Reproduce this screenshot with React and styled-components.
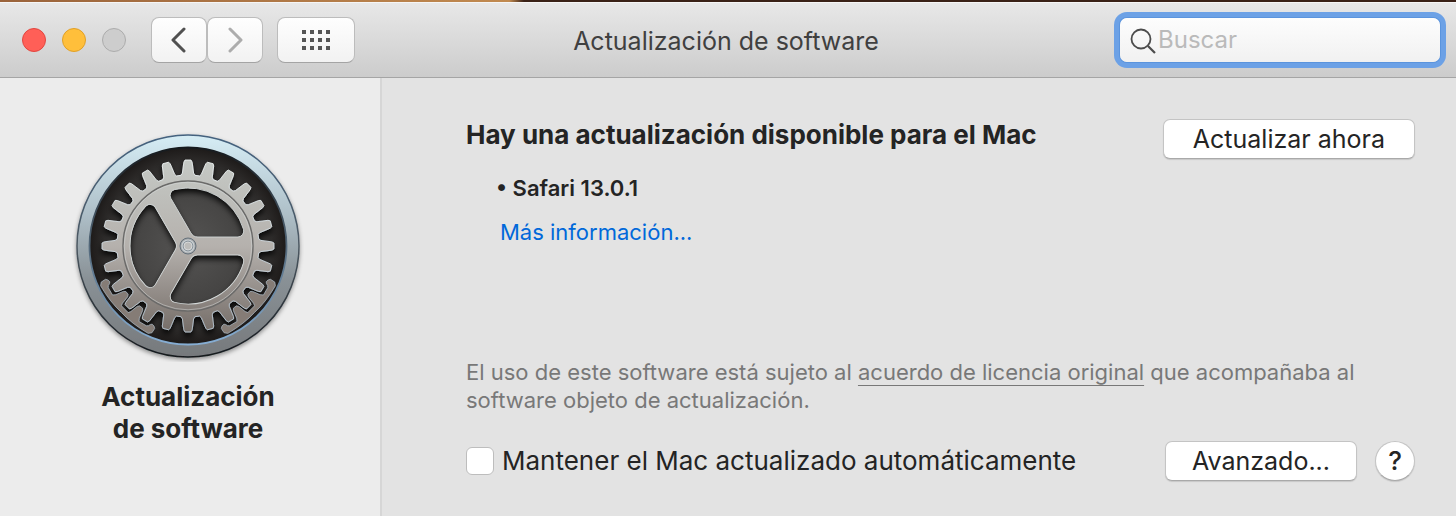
import React, { useState } from "react";
import styled, { createGlobalStyle } from "styled-components";

const GlobalStyle = createGlobalStyle`
  * {
    box-sizing: border-box;
  }
  body {
    margin: 0;
    background: #e3e3e3;
    font-family: Inter, "Liberation Sans", sans-serif;
    color: #242424;
  }
  button, input {
    font-family: inherit;
    color: inherit;
  }
`;

const TEETH = 24;

const polar = (radius, degrees) => {
  const a = (degrees * Math.PI) / 180;
  return `${(radius * Math.sin(a)).toFixed(2)} ${(-radius * Math.cos(a)).toFixed(2)}`;
};

// one closed outline going round all the teeth
const gearPath = () => {
  const parts = [];
  for (let i = 0; i < TEETH; i++) {
    const mid = (i * 360) / TEETH;
    parts.push(
      polar(71, mid - 5.6),
      polar(73, mid - 4.4),
      polar(84, mid - 2.8),
      polar(86, mid - 2),
      polar(86, mid + 2),
      polar(84, mid + 2.8),
      polar(73, mid + 4.4),
      polar(71, mid + 5.6)
    );
  }
  return `M${parts.join("L")}Z`;
};

// [degrees from the diagonal, distance from the hub], half of the small rack
const RACK = [
  [3.1, 89.5],
  [3.9, 87],
  [4.9, 79],
  [6, 77],
  [8.8, 77],
  [9.9, 79],
  [11, 87],
  [12, 90],
  [17.4, 90],
  [18.6, 89],
  [19.4, 87],
  [20.4, 86],
  [22, 87],
  [23, 89],
  [22.4, 94],
  [20.5, 96],
];

const rackPath = () => {
  const left = [...RACK].reverse().map(([a, r]) => polar(r, 225 - a));
  const right = RACK.map(([a, r]) => polar(r, 225 + a));
  return `M${[...left, ...right].join("L")}Q${polar(96, 234)} ${polar(94, 225)}Q${polar(96, 216)} ${polar(96, 204.5)}Z`;
};

const CUTOUT =
  "M10 -9H50A6 6 0 0 0 55.5 -16.7A58 58 0 0 0 -13.2 -56.5A6 6 0 0 0 -17.1 -47.6L2.8 -13.2A8 8 0 0 0 10 -9Z";

const THIRDS = [0, 120, 240];

const GearIcon = () => (
  <svg viewBox="-116 -116 232 232" width="232" height="232" aria-hidden="true">
    <defs>
      <linearGradient id="rim" x1="0" y1="0" x2="0" y2="1">
        <stop offset="0" stopColor="#d6edf5" />
        <stop offset="0.35" stopColor="#afc0c9" />
        <stop offset="0.65" stopColor="#899196" />
        <stop offset="1" stopColor="#76797c" />
      </linearGradient>
      <linearGradient id="rimEdge" x1="0" y1="0" x2="0" y2="1">
        <stop offset="0" stopColor="#44627f" />
        <stop offset="0.5" stopColor="#4c5862" />
        <stop offset="1" stopColor="#15191d" />
      </linearGradient>
      <linearGradient id="innerEdge" x1="0" y1="0" x2="0" y2="1">
        <stop offset="0" stopColor="#15191d" />
        <stop offset="0.5" stopColor="#53687a" />
        <stop offset="1" stopColor="#86aed4" />
      </linearGradient>
      <radialGradient id="well">
        <stop offset="0" stopColor="#555453" />
        <stop offset="0.6" stopColor="#444342" />
        <stop offset="0.85" stopColor="#2e2c2b" />
        <stop offset="1" stopColor="#1d1a19" />
      </radialGradient>
      <linearGradient id="metal" gradientUnits="userSpaceOnUse" x1="0" y1="-86" x2="0" y2="86">
        <stop offset="0" stopColor="#c5c9c5" />
        <stop offset="0.5" stopColor="#b5b1ad" />
        <stop offset="1" stopColor="#756d68" />
      </linearGradient>
      <linearGradient id="metalEdge" gradientUnits="userSpaceOnUse" x1="0" y1="-86" x2="0" y2="86">
        <stop offset="0" stopColor="#eef3f3" />
        <stop offset="1" stopColor="#b4c2ce" />
      </linearGradient>
      <filter id="drop" x="-20%" y="-20%" width="140%" height="140%">
        <feDropShadow dx="0" dy="2" stdDeviation="2" floodColor="#000" floodOpacity="0.4" />
      </filter>
      <filter id="deep" x="-20%" y="-20%" width="140%" height="140%">
        <feDropShadow dx="0" dy="4" stdDeviation="3" floodColor="#000" floodOpacity="0.9" />
      </filter>
      <mask id="holes">
        <rect x="-116" y="-116" width="232" height="232" fill="#fff" />
        {THIRDS.map((turn) => (
          <path key={turn} d={CUTOUT} transform={`rotate(${turn})`} fill="#000" />
        ))}
      </mask>
    </defs>
    <circle r="111" fill="url(#rim)" stroke="url(#rimEdge)" strokeWidth="1.5" filter="url(#drop)" />
    <circle r="98.5" fill="url(#well)" stroke="url(#innerEdge)" strokeWidth="1.8" />
    <g filter="url(#deep)">
      <path
        d={gearPath()}
        fill="url(#metal)"
        stroke="url(#metalEdge)"
        strokeWidth="0.9"
        strokeLinejoin="round"
        mask="url(#holes)"
      />
    </g>
    <g fill="#857c76" stroke="#a9b6c0" strokeWidth="0.8" strokeLinejoin="round">
      <path d={rackPath()} />
      <path d={rackPath()} transform="scale(-1 1)" />
    </g>
    <circle r="65" fill="none" stroke="#6a6a69" strokeWidth="1.4" />
    <circle r="63.8" fill="none" stroke="#d6dada" strokeWidth="0.7" opacity="0.7" />
    {THIRDS.map((turn) => (
      <path
        key={turn}
        d={CUTOUT}
        transform={`rotate(${turn})`}
        fill="none"
        stroke="#d3d8d8"
        strokeWidth="0.9"
      />
    ))}
    <circle r="8" fill="#a3a6a8" stroke="#65717b" strokeWidth="1" />
    <circle r="6" fill="#8b949b" stroke="#c9d0d4" strokeWidth="1.2" />
    <circle r="4" fill="#bcbcba" stroke="#dfe2e2" strokeWidth="0.8" />
  </svg>
);

const Window = styled.div`
  min-height: 100vh;
  display: flex;
  flex-direction: column;
  border-top: 2px solid #000;
  border-image: linear-gradient(90deg, #9a633b, #c18a50 35%, #3a2117 36%, #3a2117) 1;
`;

const Toolbar = styled.header`
  display: grid;
  grid-template-columns: 1fr auto 1fr;
  align-items: center;
  height: 76px;
  padding: 0 16px 0 12px;
  background: linear-gradient(#e8e8e8, #cccccc);
  border-bottom: 1px solid #a5a5a5;
  box-shadow: inset 0 1px #f6f6f6;
`;

const ToolbarGroup = styled.div`
  display: flex;
  align-items: center;
`;

const Lights = styled.div`
  display: flex;
  gap: 16px;
  margin: 0 25px 0 10px;
`;

const Light = styled.button`
  width: 24px;
  height: 24px;
  padding: 0;
  border: 1px solid ${(props) => props.$edge};
  border-radius: 50%;
  background: ${(props) => props.$color};
`;

const ToolButton = styled.button`
  display: flex;
  align-items: center;
  justify-content: center;
  width: ${(props) => (props.$wide ? "78px" : "56px")};
  height: 46px;
  margin-left: ${(props) => (props.$wide ? "14px" : "0")};
  padding: 0;
  border: 1px solid #bcbcbc;
  border-bottom-color: #a4a4a4;
  border-radius: 8px;
  background: linear-gradient(#fefefe, #f2f2f2);
`;

const Title = styled.h1`
  margin: 0;
  padding-top: 2px;
  font-size: 25px;
  line-height: 32px;
  font-weight: 400;
  color: #404040;
`;

const Search = styled.label`
  justify-self: end;
  display: flex;
  align-items: center;
  width: 320px;
  height: 44px;
  padding: 0 8px 0 9px;
  border-radius: 7px;
  background: linear-gradient(#fdfdfd, #f1f1f1);
  box-shadow: 0 0 0 1px #5b94dd, 0 0 0 6px #6ca1e6;
`;

const SearchInput = styled.input`
  flex: 1;
  min-width: 0;
  padding: 0 1px;
  border: 0;
  outline: 0;
  background: none;
  font-size: 24px;
  line-height: 32px;
  &::placeholder {
    color: #bababa;
    opacity: 1;
  }
`;

const Body = styled.div`
  flex: 1;
  display: flex;
`;

const Sidebar = styled.aside`
  flex: 0 0 382px;
  display: flex;
  flex-direction: column;
  align-items: center;
  padding: 52px 4px 0 0;
  background: #ececec;
  border-right: 2px solid #d6d6d6;
`;

const SidebarTitle = styled.h2`
  margin: 19px 0 0;
  width: 200px;
  font-size: 26px;
  line-height: 32px;
  font-weight: 700;
  text-align: center;
`;

const Content = styled.main`
  flex: 1;
  display: flex;
  flex-direction: column;
  padding: 41px 41px 35px 84px;
`;

const Row = styled.div`
  display: flex;
  align-items: center;
  justify-content: space-between;
`;

const Heading = styled.h2`
  margin: 0 0 8px;
  font-size: 26px;
  line-height: 32px;
  font-weight: 700;
`;

const Updates = styled.ul`
  margin: 13px 0 0;
  padding: 0 0 0 30px;
  list-style: none;
  font-size: 22px;
  line-height: 32px;
  font-weight: 600;
`;

const MoreLink = styled.a`
  align-self: flex-start;
  margin: 12px 0 0 34px;
  font-size: 22px;
  line-height: 32px;
  color: #0068da;
  text-decoration: none;
`;

const License = styled.p`
  max-width: 900px;
  margin: auto 0 27px;
  font-size: 22px;
  line-height: 28px;
  color: #787878;
  a {
    color: inherit;
    text-underline-offset: 5px;
    text-decoration-thickness: 1px;
    text-decoration-skip-ink: none;
  }
`;

const PushButton = styled.button`
  height: 40px;
  padding: 0 ${(props) => (props.$wide ? "29px" : "26px")};
  border: 1px solid #c4c4c4;
  border-bottom-color: #a9a9a9;
  border-radius: 7px;
  background: #fff;
  box-shadow: 0 1px 1px #00000020;
  font-size: 25px;
  line-height: 32px;
`;

const HelpButton = styled(PushButton)`
  width: 40px;
  padding: 0;
  border-radius: 50%;
  font-size: 26px;
  font-weight: 500;
`;

const Actions = styled.div`
  display: flex;
  gap: 18px;
`;

const CheckLabel = styled.label`
  display: flex;
  align-items: center;
  gap: 8px;
  font-size: 26px;
  line-height: 32px;
`;

const Checkbox = styled.input`
  appearance: none;
  width: 28px;
  height: 28px;
  margin: 0;
  border: 1px solid #bdbdbd;
  border-radius: 6px;
  background: #fff;
  &:checked {
    background: #2f7cf6;
  }
`;

const Chevron = ({ d, color }) => (
  <svg width="16" height="26" viewBox="0 0 16 26" fill="none" aria-hidden="true">
    <path d={d} stroke={color} strokeWidth="3" strokeLinecap="round" strokeLinejoin="round" />
  </svg>
);

const GridIcon = () => (
  <svg width="28" height="20" viewBox="0 0 28 20" fill="#555" aria-hidden="true">
    {[0, 8, 16].map((y) =>
      [0, 8, 16, 24].map((x) => <rect key={`${x}-${y}`} x={x} y={y} width="4" height="4" />)
    )}
  </svg>
);

const App = () => {
  const [automatic, setAutomatic] = useState(false);
  const [query, setQuery] = useState("");

  return (
    <>
      <GlobalStyle />
      <Window>
        <Toolbar>
          <ToolbarGroup>
            <Lights>
              <Light $color="#ff5f57" $edge="#e2463f" aria-label="Cerrar" />
              <Light $color="#ffbf3b" $edge="#e1a027" aria-label="Minimizar" />
              <Light $color="#cdcdcd" $edge="#acacac" aria-label="Ampliar" disabled />
            </Lights>
            <ToolButton aria-label="Atrás">
              <Chevron d="M13 2L2 13L13 24" color="#505050" />
            </ToolButton>
            <ToolButton aria-label="Adelante">
              <Chevron d="M3 2L14 13L3 24" color="#acacac" />
            </ToolButton>
            <ToolButton $wide aria-label="Mostrar todo">
              <GridIcon />
            </ToolButton>
          </ToolbarGroup>
          <Title>Actualización de software</Title>
          <Search>
            <svg width="28" height="28" viewBox="0 0 28 28" fill="none" aria-hidden="true">
              <circle cx="12" cy="13" r="9.5" stroke="#4c4c4c" strokeWidth="1.8" />
              <path d="M19 20L26 27" stroke="#4c4c4c" strokeWidth="2.2" />
            </svg>
            <SearchInput
              type="text"
              placeholder="Buscar"
              aria-label="Buscar"
              value={query}
              onChange={(e) => setQuery(e.target.value)}
            />
          </Search>
        </Toolbar>
        <Body>
          <Sidebar>
            <GearIcon />
            <SidebarTitle>Actualización de software</SidebarTitle>
          </Sidebar>
          <Content>
            <Row>
              <Heading>Hay una actualización disponible para el Mac</Heading>
              <PushButton $wide>Actualizar ahora</PushButton>
            </Row>
            <Updates>
              <li>• Safari 13.0.1</li>
            </Updates>
            <MoreLink href="#info">Más información...</MoreLink>
            <License>
              El uso de este software está sujeto al <a href="#licencia">acuerdo de licencia original</a>{" "}
              que acompañaba al software objeto de actualización.
            </License>
            <Row>
              <CheckLabel>
                <Checkbox
                  type="checkbox"
                  checked={automatic}
                  onChange={(e) => setAutomatic(e.target.checked)}
                />
                Mantener el Mac actualizado automáticamente
              </CheckLabel>
              <Actions>
                <PushButton>Avanzado...</PushButton>
                <HelpButton aria-label="Ayuda">?</HelpButton>
              </Actions>
            </Row>
          </Content>
        </Body>
      </Window>
    </>
  );
};

export default App;
